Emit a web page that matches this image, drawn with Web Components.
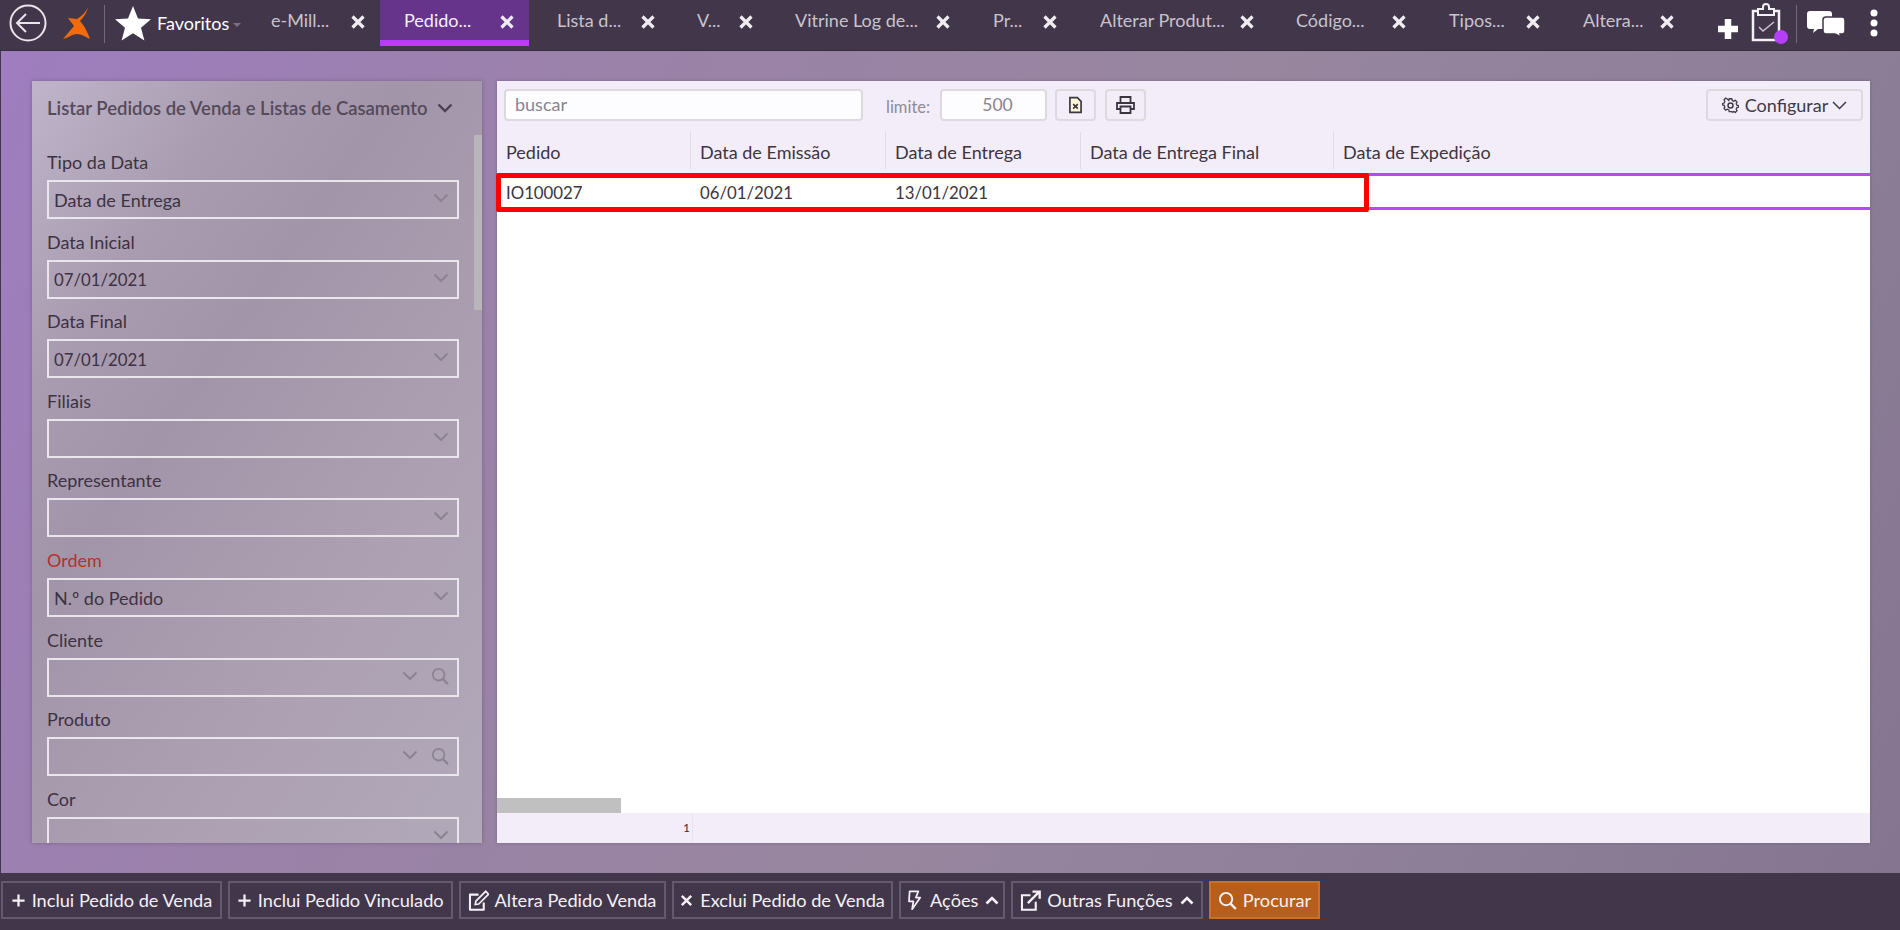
<!DOCTYPE html>
<html lang="pt">
<head>
<meta charset="utf-8">
<title>Pedidos</title>
<style>
    html, body { margin: 0; height: 100%; overflow: hidden; }
    body { font-family: Lato, "Open Sans", sans-serif; }
</style>
</head>
<body>
<app-shell>
    <app-topbar slot="top">
        <app-tab width="133" pad="24">e-Mill...</app-tab>
        <app-tab width="149" pad="24" active>Pedido...</app-tab>
        <app-tab width="141" pad="28">Lista d...</app-tab>
        <app-tab width="98" pad="27">V...</app-tab>
        <app-tab width="197" pad="27">Vitrine Log de...</app-tab>
        <app-tab width="107" pad="28">Pr...</app-tab>
        <app-tab width="197" pad="28">Alterar Produt...</app-tab>
        <app-tab width="152" pad="27">Código...</app-tab>
        <app-tab width="134" pad="28">Tipos...</app-tab>
        <app-tab width="134" pad="28">Altera...</app-tab>
    </app-topbar>

    <filter-panel slot="left" heading="Listar Pedidos de Venda e Listas de Casamento">
        <filter-field label="Tipo da Data">Data de Entrega</filter-field>
        <filter-field label="Data Inicial" numeric>07/01/2021</filter-field>
        <filter-field label="Data Final" numeric>07/01/2021</filter-field>
        <filter-field label="Filiais"></filter-field>
        <filter-field label="Representante"></filter-field>
        <filter-field label="Ordem" required>N.º do Pedido</filter-field>
        <filter-field label="Cliente" search></filter-field>
        <filter-field label="Produto" search></filter-field>
        <filter-field label="Cor"></filter-field>
    </filter-panel>

    <data-grid slot="right"></data-grid>

    <action-bar slot="bottom">
        <action-button icon="plus" width="221">Inclui Pedido de Venda</action-button>
        <action-button icon="plus" width="224.5">Inclui Pedido Vinculado</action-button>
        <action-button icon="edit" width="207">Altera Pedido Venda</action-button>
        <action-button icon="times" width="221">Exclui Pedido de Venda</action-button>
        <action-button icon="bolt" caret width="106.500">Ações</action-button>
        <action-button icon="external" caret width="192">Outras Funções</action-button>
        <action-button icon="search" primary width="111">Procurar</action-button>
    </action-bar>
</app-shell>

<script>
const ICONS = {
    plus: '<path d="M8 1.500v13M1.500 8h13" stroke="currentColor" stroke-width="2.400" fill="none"/>',
    times: '<path d="M3 3l10 10M13 3L3 13" stroke="currentColor" stroke-width="2.600" fill="none"/>',
    edit: '<path d="M12 9.500V15H1.500V3.500H8" stroke="currentColor" stroke-width="1.600" fill="none" stroke-linejoin="round"/><path d="M6 8.500L13.500 1l2.200 2.200L8.200 10.700 5.500 11z" stroke="currentColor" stroke-width="1.300" fill="none"/>',
    external: '<path d="M12 9v6H1.500V4H8" stroke="currentColor" stroke-width="1.600" fill="none"/><path d="M6 10l8-8M9.500 1.200h5.500v5.500" stroke="currentColor" stroke-width="1.800" fill="none"/>',
    bolt: '<path d="M4.500 1h7L9.500 6H13L6.500 15.500 7.500 9H4z" stroke="currentColor" stroke-width="1.400" fill="none" stroke-linejoin="round"/>',
    search: '<circle cx="6.800" cy="6.800" r="5.200" stroke="currentColor" stroke-width="1.600" fill="none"/><path d="M10.600 10.600l4.400 4.600" stroke="currentColor" stroke-width="2" fill="none"/>'
};
const ICON_SIZE = {plus: 15, times: 15, edit: 21, external: 21, bolt: 20, search: 19};

class AppShell extends HTMLElement {
    constructor() {
        super();
        this.attachShadow({mode: 'open'}).innerHTML = `
            <style>
                :host {
                    display: grid;
                    grid-template-rows: 51px 1fr 57px;
                    height: 930px;
                    background: #42364a;
                }
                #main {
                    display: flex;
                    gap: 15px;
                    padding: 30px 30px 30px 31px;
                    margin-left: 1px;
                    min-height: 0;
                    background: linear-gradient(115deg, #9f7dbf 0%, #9a82a8 28%, #98869f 55%, #8d7e98 82%, #857590 100%);
                }
            </style>
            <slot name="top"></slot>
            <div id="main">
                <slot name="left"></slot>
                <slot name="right"></slot>
            </div>
            <slot name="bottom"></slot>
        `;
    }
}

class AppTopbar extends HTMLElement {
    constructor() {
        super();
        this.attachShadow({mode: 'open'}).innerHTML = `
            <style>
                :host {
                    display: flex;
                    align-items: flex-start;
                    height: 51px;
                    background: #42364a;
                    border-bottom: 1px solid #372c3e;
                    box-sizing: border-box;
                    color: #fff;
                }
                svg { display: block; flex: none; overflow: visible; }
                .divider { flex: none; width: 1px; height: 38px; margin-top: 5px; background: #75697d; }
                #brand { display: flex; align-items: center; height: 46px; }
                #fav { display: flex; align-items: center; flex: none; width: 142px; height: 46px; font-size: 18px; }
                #caret { width: 0; height: 0; margin: 3px 0 0 4px; border: 4px solid transparent; border-top-color: #7d7385; border-bottom: 0; }
                #tools { display: flex; align-items: flex-start; margin-left: 29px; }
            </style>
            <div id="brand">
                <svg width="38" height="38" viewBox="0 0 38 38" style="margin-left:9px">
                    <circle cx="19" cy="19" r="17.500" fill="none" stroke="#e8e4ea" stroke-width="2"/>
                    <path d="M31 19H8M17 10l-9 9 9 9" fill="none" stroke="#e8e4ea" stroke-width="2"/>
                </svg>
                <svg width="30" height="34" viewBox="0 0 30 34" style="margin:-1px 0 0 14px">
                    <path d="M27 1C25 6 21 10 16 13L7 12l6 8L2 33c5-1 9-5 14-5 4 0 9 3 13 5C27 27 23 19 19 15 23 11 26 6 27 1z" fill="#f56a0a"/>
                </svg>
            </div>
            <div class="divider" style="margin-left:13px"></div>
            <div id="fav">
                <svg width="36" height="34" viewBox="0 0 36 34" style="margin:0 6px 0 10px">
                    <path d="M18 0l5 12.500 13 .8-10 8.400 3.400 12.800L18 27.300 6.600 34.500 10 21.700 0 13.300l13-.8z" fill="#fff"/>
                </svg>
                <span>Favoritos</span><span id="caret"></span>
            </div>
            <slot style="display:flex"></slot>
            <div id="tools">
                <svg width="20" height="20" viewBox="0 0 20 20" style="margin:19px 13px 0 0">
                    <path d="M10 0v20M0 10h20" stroke="#fff" stroke-width="6.500"/>
                </svg>
                <svg width="36" height="38" viewBox="0 0 36 38" style="margin:4px 0 0 0">
                    <path d="M7 5h5V3a3 3 0 0 1 6 0v2h5v6H7z" fill="none" stroke="#f2f0f4" stroke-width="2"/>
                    <path d="M7 7H2v29h26V7h-5" fill="none" stroke="#f2f0f4" stroke-width="2.500"/>
                    <path d="M8 23l4 4 11-9" fill="none" stroke="#c9c3ce" stroke-width="1.600"/>
                    <circle cx="30" cy="33" r="7" fill="#b53ff5"/>
                </svg>
                <div class="divider" style="margin:5px 0 0 9px"></div>
                <svg width="38" height="27" viewBox="0 0 38 27" style="margin:11px 0 0 10px">
                    <path d="M3 0h19a3 3 0 0 1 3 3v12a3 3 0 0 1-3 3H11l-5 4 1-4H3a3 3 0 0 1-3-3V3a3 3 0 0 1 3-3z" fill="#fff"/>
                    <path d="M19 6h16a3 3 0 0 1 3 3v11a3 3 0 0 1-3 3h-2l1 3-6-3h-9a3 3 0 0 1-3-3v-11a3 3 0 0 1 3-3z" fill="#fff" stroke="#42364a" stroke-width="1.500"/>
                </svg>
                <svg width="8" height="28" viewBox="0 0 8 28" style="margin:9px 0 0 24.500px">
                    <circle cx="4" cy="4" r="3.500" fill="#fff"/><circle cx="4" cy="14" r="3.500" fill="#fff"/><circle cx="4" cy="24" r="3.500" fill="#fff"/>
                </svg>
            </div>
        `;
    }
}

class AppTab extends HTMLElement {
    constructor() {
        super();
        this.attachShadow({mode: 'open'}).innerHTML = `
            <style>
                :host {
                    display: flex;
                    align-items: center;
                    flex: none;
                    box-sizing: border-box;
                    height: 46px;
                    padding-bottom: 6px;
                    position: relative;
                    font-size: 18px;
                    color: #c9c3ce;
                    white-space: nowrap;
                }
                :host([active]) {
                    background: #66348a;
                    border-bottom: 6px solid #b93cf9;
                    padding-bottom: 0;
                    color: #f4eef8;
                }
                svg { position: absolute; right: 15px; top: 15px; }
            </style>
            <slot></slot>
            <svg width="14" height="14" viewBox="0 0 14 14"><path d="M1.500 1.500l11 11M12.500 1.500l-11 11" stroke="#f0edf2" stroke-width="3.200"/></svg>
        `;
    }

    connectedCallback() {
        this.style.width = this.getAttribute('width') + 'px';
        this.style.paddingLeft = this.getAttribute('pad') + 'px';
    }
}

class FilterPanel extends HTMLElement {
    constructor() {
        super();
        this.attachShadow({mode: 'open'}).innerHTML = `
            <style>
                :host {
                    display: flex;
                    flex-direction: column;
                    flex: none;
                    position: relative;
                    width: 450px;
                    height: 762px;
                    overflow: hidden;
                    background: linear-gradient(125deg, #bfb4ca 0%, #a99cb0 22%, #a395a9 38%, #ab9db0 60%, #b1a9b9 100%);
                    box-shadow: 0 0 4px rgba(60, 40, 70, .35);
                }
                #title {
                    display: flex;
                    align-items: center;
                    flex: none;
                    height: 54px;
                    padding-left: 15px;
                    font-size: 18.500px;
                    font-weight: 600;
                    color: #544a59;
                    white-space: nowrap;
                }
                #title svg { margin-left: 9px; }
                #body { padding: 16px 0 0 15px; }
                #thumb {
                    position: absolute;
                    left: 442px;
                    top: 54px;
                    width: 8px;
                    height: 175px;
                    background: #b9b6bb;
                }
            </style>
            <div id="title"><span id="heading"></span>
                <svg width="16" height="10" viewBox="0 0 16 10"><path d="M1.500 1.500L8 8l6.500-6.500" fill="none" stroke="#4b4150" stroke-width="2.400"/></svg>
            </div>
            <div id="body"><slot></slot></div>
            <div id="thumb"></div>
        `;
    }

    connectedCallback() {
        this.shadowRoot.getElementById('heading').textContent = this.getAttribute('heading');
    }
}

class FilterField extends HTMLElement {
    constructor() {
        super();
        this.attachShadow({mode: 'open'}).innerHTML = `
            <style>
                :host {
                    display: block;
                    box-sizing: border-box;
                    width: 412px;
                    height: 79.600px;
                    font-size: 18px;
                    color: #3c3241;
                }
                #label { height: 24px; line-height: 23px; margin-bottom: 5px; }
                :host([required]) #label { color: #b3322c; }
                #box {
                    display: flex;
                    align-items: center;
                    box-sizing: border-box;
                    height: 39px;
                    padding: 0 8px 0 5px;
                    border: 2px solid #e9e6ec;
                }
                #val { flex: 1; padding-top: 1px; }
                :host([numeric]) #val { font-size: 16.800px; }
                svg { display: block; flex: none; }
                #chev { margin-top: -3px; }
                #search { margin: -2px 0 0 13px; display: none; }
                :host([search]) #search { display: block; }
            </style>
            <div id="label"></div>
            <div id="box">
                <span id="val"><slot></slot></span>
                <svg id="chev" width="16" height="10" viewBox="0 0 16 10"><path d="M1.500 1.500L8 8l6.500-6.500" fill="none" stroke="#8b8390" stroke-width="2"/></svg>
                <svg id="search" width="18" height="18" viewBox="0 0 16 16">${ICONS.search}</svg>
            </div>
        `;
    }

    connectedCallback() {
        this.shadowRoot.getElementById('label').textContent = this.getAttribute('label');
        this.shadowRoot.getElementById('search').style.color = '#8b8390';
    }
}

class DataGrid extends HTMLElement {
    constructor() {
        super();
        this.attachShadow({mode: 'open'}).innerHTML = `
            <style>
                :host {
                    display: flex;
                    flex-direction: column;
                    flex: 1;
                    position: relative;
                    height: 762px;
                    background: #fff;
                    font-size: 18px;
                    color: #3d3540;
                    box-shadow: 0 0 3px rgba(60, 40, 70, .3);
                }
                #tools {
                    display: flex;
                    align-items: flex-start;
                    box-sizing: border-box;
                    height: 50px;
                    padding: 8px 7px 0 7px;
                    background: #f2edf8;
                }
                .inp, .btn {
                    display: flex;
                    align-items: center;
                    box-sizing: border-box;
                    height: 32px;
                    border: 2px solid #dcd9df;
                    border-radius: 4px;
                }
                .inp { background: #fdfcfe; color: #8a8490; padding-bottom: 2px; }
                .btn { justify-content: center; background: #f2edf8; }
                #search { width: 359px; padding-left: 9px; }
                #lim { width: 48px; margin: 8px 0 0 23px; font-size: 16.500px; color: #8f8c92; }
                #limit { width: 107px; margin-left: 6px; justify-content: center; padding-left: 8px; font-size: 17.500px; }
                #config { width: 157px; margin-left: auto; gap: 6px; color: #413a45; }
                #head, #row {
                    display: grid;
                    grid-template-columns: 194px 195px 195px 253px 1fr;
                }
                #head { height: 42px; background: #f2edf8; }
                #head div {
                    display: flex;
                    align-items: center;
                    height: 37px;
                    margin-top: 1px;
                    padding-left: 9px;
                    border-right: 1px solid #dfdae4;
                    padding-top: 3px;
                    box-sizing: border-box;
                    white-space: nowrap;
                }
                #head div:last-child { border: 0; }
                #row {
                    box-sizing: border-box;
                    height: 37px;
                    align-items: center;
                    border-top: 3px solid #b947f7;
                    border-bottom: 3px solid #b947f7;
                    font-size: 16.800px;
                }
                #row div { padding: 2px 0 0 9px; }
                #spacer { flex: 1; }
                #scroll { height: 15px; }
                #scroll div { width: 124px; height: 15px; background: #c0c0c0; }
                #foot {
                    display: flex;
                    box-sizing: border-box;
                    height: 30px;
                    background: #f2edf8;
                    font-size: 12px;
                    color: #333;
                    align-items: center;
                    padding-left: 186px;
                }
                #foot span { border-right: 1px solid #e8e3ee; padding-right: 2px; line-height: 30px; }
                #mark {
                    position: absolute;
                    left: -1px;
                    top: 92px;
                    width: 873px;
                    height: 39px;
                    box-sizing: border-box;
                    border: 5px solid #f00;
                    border-radius: 2px;
                }
                svg { display: block; }
            </style>
            <div id="tools">
                <div class="inp" id="search">buscar</div>
                <span id="lim">limite:</span>
                <div class="inp" id="limit">500</div>
                <div class="btn" style="width:41px;margin-left:8px">
                    <svg width="13" height="18" viewBox="0 0 14 18">
                        <path d="M1 1h8l4 4v12H1z" fill="#fff6d8" stroke="#3c3540" stroke-width="1.800"/>
                        <path d="M4.500 8l5 5M9.500 8l-5 5" stroke="#3c3540" stroke-width="1.800"/>
                    </svg>
                </div>
                <div class="btn" style="width:41px;margin-left:9px">
                    <svg width="19" height="18" viewBox="0 0 19 18">
                        <path d="M4.500 7V1h10v6M4.500 13H1V7h17v6h-3.500M4.500 10.500h10V17h-10z" fill="none" stroke="#3c3540" stroke-width="1.800"/>
                    </svg>
                </div>
                <div class="btn" id="config">
                    <svg width="17" height="17" viewBox="0 0 17 17">
                        <circle cx="8.500" cy="8.500" r="2.500" fill="none" stroke="#413a45" stroke-width="1.500"/>
                        <path d="M7 1h3l.5 2 1.800.8 1.800-1 2 2.100-1 1.800.7 1.800 2 .5v1.800l-2 .6-.7 1.700 1 1.800-2 2-1.800-1-1.800.8L10 16H7l-.5-2-1.800-.8-1.800 1-2-2 1-1.800-.7-1.700-2-.6V6.500l2-.5.7-1.800-1-1.800 2-2.100 1.800 1L6.500 3z" transform="translate(1.200 .9) scale(.86)" fill="none" stroke="#413a45" stroke-width="1.500"/>
                    </svg>
                    <span>Configurar</span>
                    <svg width="15" height="9" viewBox="0 0 15 9" style="margin-left:-2px"><path d="M1 1l6.500 6.500L14 1" fill="none" stroke="#413a45" stroke-width="1.500"/></svg>
                </div>
            </div>
            <div id="head">
                <div>Pedido</div><div>Data de Emissão</div><div>Data de Entrega</div><div>Data de Entrega Final</div><div>Data de Expedição</div>
            </div>
            <div id="row">
                <div>IO100027</div><div>06/01/2021</div><div>13/01/2021</div><div></div><div></div>
            </div>
            <div id="spacer"></div>
            <div id="scroll"><div></div></div>
            <div id="foot"><span>1</span></div>
            <div id="mark"></div>
        `;
    }
}

class ActionBar extends HTMLElement {
    constructor() {
        super();
        this.attachShadow({mode: 'open'}).innerHTML = `
            <style>
                :host {
                    display: flex;
                    gap: 6px;
                    box-sizing: border-box;
                    height: 57px;
                    padding: 8px 0 0 1px;
                    background: #42364a;
                }
            </style>
            <slot></slot>
        `;
    }
}

class ActionButton extends HTMLElement {
    constructor() {
        super();
        this.attachShadow({mode: 'open'}).innerHTML = `
            <style>
                :host {
                    display: flex;
                    align-items: center;
                    justify-content: center;
                    gap: 6px;
                    flex: none;
                    box-sizing: border-box;
                    height: 38px;
                    border: 2px solid #655a6d;
                    font-size: 18.200px;
                    color: #f4f1f6;
                    white-space: nowrap;
                }
                :host([primary]) { background: #b85e1c; border-color: #c9702b; }
                svg { display: block; flex: none; }
                #caret { display: none; margin-left: 1px; }
                :host([caret]) #caret { display: block; }
            </style>
            <svg id="icon" viewBox="0 0 16 16"></svg>
            <span><slot></slot></span>
            <svg id="caret" width="14" height="9" viewBox="0 0 14 9"><path d="M1.500 7.500L7 2l5.500 5.500" fill="none" stroke="#f4f1f6" stroke-width="2.600"/></svg>
        `;
    }

    connectedCallback() {
        const name = this.getAttribute('icon');
        const icon = this.shadowRoot.getElementById('icon');
        this.style.width = this.getAttribute('width') + 'px';
        icon.setAttribute('width', ICON_SIZE[name]);
        icon.setAttribute('height', ICON_SIZE[name]);
        icon.innerHTML = ICONS[name];
    }
}

customElements.define('app-shell', AppShell);
customElements.define('app-topbar', AppTopbar);
customElements.define('app-tab', AppTab);
customElements.define('filter-panel', FilterPanel);
customElements.define('filter-field', FilterField);
customElements.define('data-grid', DataGrid);
customElements.define('action-bar', ActionBar);
customElements.define('action-button', ActionButton);
</script>
</body>
</html>
